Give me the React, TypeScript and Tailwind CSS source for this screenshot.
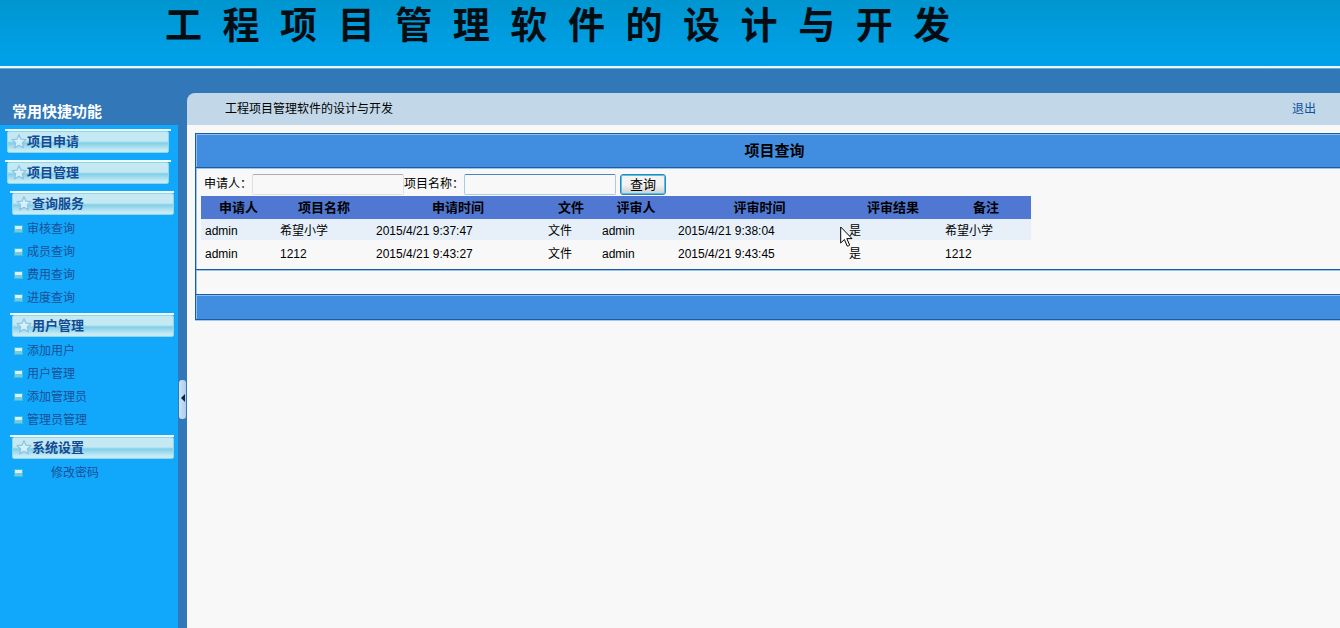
import React from "react";

type Group = { title: string; links: string[]; inset: boolean };

const groups: Group[] = [
  { title: "项目申请", links: [], inset: false },
  { title: "项目管理", links: [], inset: false },
  { title: "查询服务", links: ["审核查询", "成员查询", "费用查询", "进度查询"], inset: true },
  { title: "用户管理", links: ["添加用户", "用户管理", "添加管理员", "管理员管理"], inset: true },
  { title: "系统设置", links: ["修改密码"], inset: true },
];

const columns = [
  { label: "申请人", width: "w-[75px]" },
  { label: "项目名称", width: "w-[96px]" },
  { label: "申请时间", width: "w-[172px]" },
  { label: "文件", width: "w-[54px]" },
  { label: "评审人", width: "w-[76px]" },
  { label: "评审时间", width: "w-[171px]" },
  { label: "评审结果", width: "w-[96px]" },
  { label: "备注", width: "w-[90px]" },
];

const rows = [
  ["admin", "希望小学", "2015/4/21 9:37:47", "文件", "admin", "2015/4/21 9:38:04", "是", "希望小学"],
  ["admin", "1212", "2015/4/21 9:43:27", "文件", "admin", "2015/4/21 9:43:45", "是", "1212"],
];

function Star() {
  return (
    <svg className="h-4 w-4 shrink-0" viewBox="0 0 16 16" aria-hidden="true">
      <path
        d="M8 0.8 L10 5.2 L15 5.6 L11.3 8.9 L12.5 13.9 L8 11.3 L3.5 13.9 L4.7 8.9 L1 5.6 L6 5.2 Z"
        fill="#d3f1fb"
        stroke="#93c2e2"
        strokeWidth="1.3"
        strokeLinejoin="round"
      />
    </svg>
  );
}

function SideGroup({ title, links, inset }: Group) {
  return (
    <section className={links.length > 0 ? "mb-1" : "mb-[7px]"}>
      <div className={inset ? "ml-[10px] mr-1" : "ml-[5px] mr-[7px]"}>
        <div className="h-[2px] bg-[#eefaff]" />
        <button
          type="button"
          className="ml-[2px] flex h-[22px] w-[162px] items-center rounded-[2px] border border-[#8fd6ea] bg-linear-to-b from-[#c4e9f3] from-45% via-[#80cfe8] via-55% to-[#c6ebf4] to-90% pl-[3px] text-[13px] font-bold text-[#134a94]"
        >
          <Star />
          {title}
        </button>
      </div>
      {links.length > 0 && (
        <ul className="pt-[2px]">
          {links.map((link) => (
            <li key={link} className="flex h-[23px] items-center pl-[14px]">
              <span className="mr-1 h-2 w-[9px] border border-[#35bfe0] bg-linear-to-b from-[#d6f2f6] from-50% to-[#7cc8da] to-50%" />
              <a href="#" className={links.length === 1 ? "pl-6 text-[#1b4f96]" : "text-[#1b4f96]"}>
                {link}
              </a>
            </li>
          ))}
        </ul>
      )}
    </section>
  );
}

export default function App() {
  return (
    <div className="relative flex min-h-screen flex-col overflow-hidden bg-[#f8f8f8] font-['Liberation_Sans','Noto_Sans_CJK_SC',sans-serif] text-[12px] leading-4 text-black">
      <header className="flex h-[69px] flex-col border-b border-[#5fb0e0] bg-linear-to-b from-[#0096d0] to-[#00a2ec]">
        <h1 className="h-[66px] pt-[2px] pl-[165px] text-[37px] leading-[50px] font-bold whitespace-pre text-[#060d12]">
          {"工程项目管理软件的设计与开发".split("").join("  ")}
        </h1>
        <div className="h-[2px] bg-[#eef6fb]" />
      </header>

      <div className="flex flex-1 bg-[#3277b8]">
        <aside className="flex w-[178px] shrink-0 flex-col">
          <h2 className="h-14 pt-[35px] pl-3 text-[15px] font-bold text-white">常用快捷功能</h2>
          <nav className="flex-1 bg-[#11a8fb] pt-1" aria-label="常用快捷功能">
            {groups.map((group) => (
              <SideGroup key={group.title} {...group} />
            ))}
          </nav>
        </aside>

        <div className="w-[9px] shrink-0 px-px pt-[311px]">
          <button
            type="button"
            aria-label="收起"
            className="flex h-[39px] w-[7px] items-center justify-center rounded-[3px] bg-linear-to-r from-[#cfe2f6] to-[#aacdf0] pb-1"
          >
            <svg className="h-2 w-[5px]" viewBox="0 0 5 8" aria-hidden="true">
              <path d="M5 0 L1 4 L5 8 Z" fill="#06223f" />
            </svg>
          </button>
        </div>

        <div className="flex min-w-0 flex-1 flex-col pt-6">
          <div className="flex h-8 items-center justify-between rounded-tl-lg bg-[#c2d8e8] pr-6 pl-[38px]">
            <span>工程项目管理软件的设计与开发</span>
            <a href="#" className="text-[#0f4f9f]">退出</a>
          </div>

          <main className="flex-1 bg-[#f8f8f8] pt-2 pl-2">
            <div className="-mr-[13px] border border-[#1a5ca4] shadow-[0_1px_0_#a9c9ea]">
              <h2 className="flex h-[33px] items-center justify-center border-t border-l border-[#8dbcec] bg-[#418ee0] text-[15px] font-bold">
                项目查询
              </h2>
              <div className="border-y border-[#1a5ca4]">
                <div className="border-t border-l border-[#9cc3ea] pt-[5px] pb-1 pl-1">
                  <form className="flex h-[22px] items-start pl-[3px]" onSubmit={(e) => e.preventDefault()}>
                    <label htmlFor="applicant" className="leading-5">申请人：</label>
                    <input
                      id="applicant"
                      className="h-[21px] w-[152px] rounded-[2px] border border-[#dcdfe6] border-t-[#a9abb5] bg-transparent px-1"
                    />
                    <label htmlFor="project" className="leading-5">项目名称：</label>
                    <input
                      id="project"
                      className="h-[21px] w-[152px] rounded-[2px] border border-[#a8cdea] border-t-[#4a86b8] bg-transparent px-1"
                    />
                    <button
                      type="submit"
                      className="ml-1 h-[21px] w-[46px] rounded-[3px] border border-[#3c7fb1] bg-linear-to-b from-[#f3f3f3] from-50% to-[#cfcfcf] text-[13px] leading-4 inset-ring inset-ring-[#48c8f0]"
                    >
                      查询
                    </button>
                  </form>
                  <table className="w-[830px] table-fixed border-collapse text-left">
                    <thead>
                      <tr className="h-[23px] bg-[#5078d2] text-[13px]">
                        {columns.map((c) => (
                          <th key={c.label} className={c.width + " p-0 text-center font-bold"}>
                            {c.label}
                          </th>
                        ))}
                      </tr>
                    </thead>
                    <tbody>
                      {rows.map((row, i) => (
                        <tr key={i} className={i === 0 ? "h-[23px] bg-linear-to-b from-[#e7f0f9] from-90% to-[#f8f8f8] to-90%" : "h-[23px]"}>
                          {row.map((cell, j) => (
                            <td key={j} className="p-0 pl-1 whitespace-nowrap">{cell}</td>
                          ))}
                        </tr>
                      ))}
                    </tbody>
                  </table>
                </div>
              </div>
              <div className="h-6 border-t border-l border-[#9cc3ea]" />
              <div className="border-t border-[#1a5ca4]">
                <div className="h-6 border-t border-l border-[#8dbcec] bg-[#418ee0]" />
              </div>
            </div>
          </main>
        </div>
      </div>

      <svg className="pointer-events-none absolute top-[226px] left-[840px] h-[22px] w-[14px]" viewBox="0 0 14 22" aria-hidden="true">
        <path
          d="M0.7 1 V17 L4.4 13.5 L7.2 20 Q8.7 20.6 9.6 19 L6.8 12.6 H12 Z"
          fill="#fff"
          stroke="#000"
          strokeWidth="1"
        />
      </svg>
    </div>
  );
}
